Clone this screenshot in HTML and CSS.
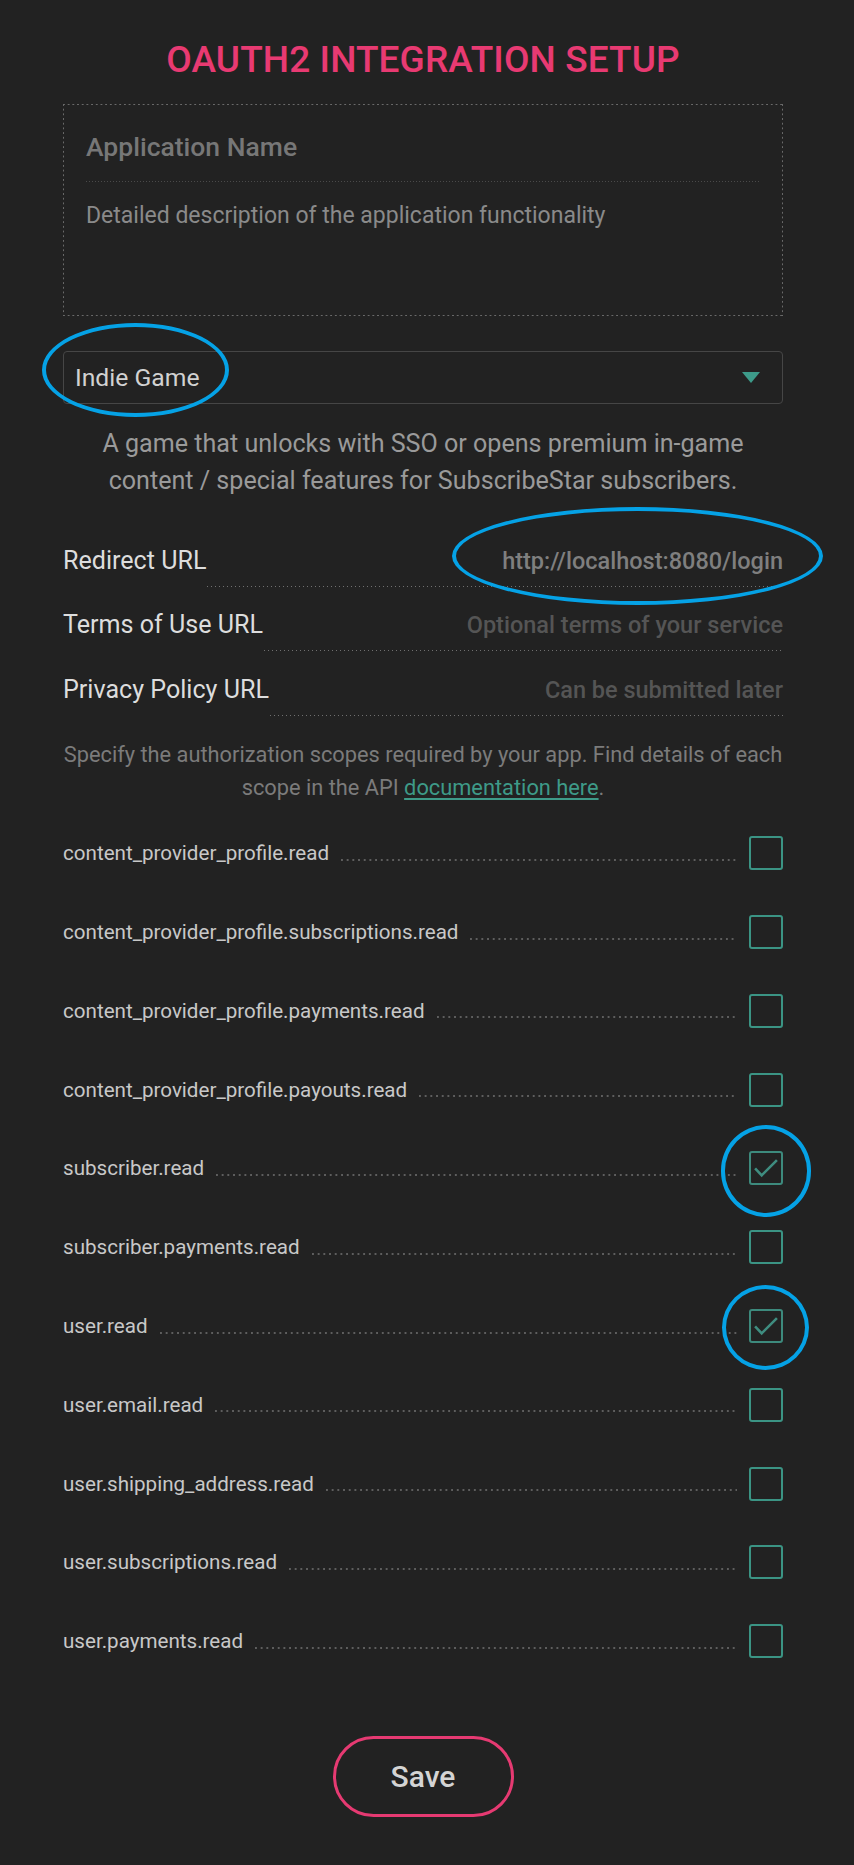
FILE: index.html
```html
<!DOCTYPE html>
<html lang="en">
<head>
<meta charset="utf-8">
<title>OAuth2 Integration Setup</title>
<link rel="stylesheet" href="styles.css">
</head>
<body>
<main class="page">
  <h1 class="title">OAUTH2 INTEGRATION SETUP</h1>

  <section class="app-box">
    <div class="app-name">Application Name</div>
    <div class="app-desc">Detailed description of the application functionality</div>
  </section>

  <div class="select">
    <span class="select-value">Indie Game</span>
    <span class="caret"></span>
  </div>

  <p class="type-desc">A game that unlocks with SSO or opens premium in-game content / special features for SubscribeStar subscribers.</p>

  <div class="url-row">
    <span class="url-label">Redirect URL</span>
    <span class="url-field filled">http://localhost:8080/login</span>
  </div>
  <div class="url-row">
    <span class="url-label">Terms of Use URL</span>
    <span class="url-field">Optional terms of your service</span>
  </div>
  <div class="url-row">
    <span class="url-label">Privacy Policy URL</span>
    <span class="url-field">Can be submitted later</span>
  </div>

  <p class="help">Specify the authorization scopes required by your app. Find details of each scope in the API <a class="doc-link" href="#">documentation here</a>.</p>

  <ul class="scopes">
    <li class="scope"><span class="scope-name">content_provider_profile.read</span><span class="leader"></span><span class="box"></span></li>
    <li class="scope"><span class="scope-name">content_provider_profile.subscriptions.read</span><span class="leader"></span><span class="box"></span></li>
    <li class="scope"><span class="scope-name">content_provider_profile.payments.read</span><span class="leader"></span><span class="box"></span></li>
    <li class="scope"><span class="scope-name">content_provider_profile.payouts.read</span><span class="leader"></span><span class="box"></span></li>
    <li class="scope"><span class="scope-name">subscriber.read</span><span class="leader"></span><span class="box checked"><svg viewBox="0 0 34 34" width="34" height="34"><polyline points="7,18.3 12.7,24.3 27,10" /></svg></span></li>
    <li class="scope"><span class="scope-name">subscriber.payments.read</span><span class="leader"></span><span class="box"></span></li>
    <li class="scope"><span class="scope-name">user.read</span><span class="leader"></span><span class="box checked"><svg viewBox="0 0 34 34" width="34" height="34"><polyline points="7,18.3 12.7,24.3 27,10" /></svg></span></li>
    <li class="scope"><span class="scope-name">user.email.read</span><span class="leader"></span><span class="box"></span></li>
    <li class="scope"><span class="scope-name">user.shipping_address.read</span><span class="leader"></span><span class="box"></span></li>
    <li class="scope"><span class="scope-name">user.subscriptions.read</span><span class="leader"></span><span class="box"></span></li>
    <li class="scope"><span class="scope-name">user.payments.read</span><span class="leader"></span><span class="box"></span></li>
  </ul>

  <div class="actions">
    <button class="save" type="button">Save</button>
  </div>

  <span class="mark mark-select"></span>
  <span class="mark mark-url"></span>
  <span class="mark mark-sub"></span>
  <span class="mark mark-user"></span>
</main>
</body>
</html>
```
FILE: styles.css
```css
html, body {
  margin: 0;
  padding: 0;
  background: #222222;
}

body {
  font-family: Roboto, "Noto Sans", "Liberation Sans", sans-serif;
  color: #cccccc;
}

.page {
  position: relative;
  width: 720px;
  margin-left: 63px;
  padding-bottom: 40px;
}

.title {
  margin: 0;
  padding-top: 38px;
  font-size: 37px;
  line-height: 44px;
  font-weight: 500;
  color: #e83a72;
  text-align: center;
  letter-spacing: 0.1px;
}

.app-box {
  box-sizing: border-box;
  height: 212px;
  margin-top: 22px;
  padding: 27px 23px 0;
  background-image:
    linear-gradient(to right, #6a6a6a 2px, transparent 2px),
    linear-gradient(to right, #6a6a6a 2px, transparent 2px),
    linear-gradient(to bottom, #6a6a6a 2px, transparent 2px),
    linear-gradient(to bottom, #6a6a6a 2px, transparent 2px);
  background-size: 4.7px 1px, 4.7px 1px, 1px 4.7px, 1px 4.7px;
  background-position: left top, left bottom, left top, right top;
  background-repeat: repeat-x, repeat-x, repeat-y, repeat-y;
}

.app-name {
  font-size: 26.5px;
  line-height: 32px;
  font-weight: 500;
  color: #777777;
  padding-bottom: 19px;
  background-image: linear-gradient(to right, #4a4a4a 1px, transparent 1px);
  background-size: 3px 1px;
  background-position: left bottom;
  background-repeat: repeat-x;
}

.app-desc {
  margin-top: 20px;
  font-size: 23px;
  line-height: 28px;
  color: #8a8a8a;
}

.select {
  box-sizing: border-box;
  height: 53px;
  margin-top: 35px;
  padding: 0 22px 0 11px;
  border: 1px solid #464646;
  border-radius: 4px;
  display: flex;
  align-items: center;
  justify-content: space-between;
}

.select-value {
  font-size: 24.7px;
  line-height: 51px;
  color: #d2d2d2;
}

.caret {
  width: 0;
  height: 0;
  border-left: 9.5px solid transparent;
  border-right: 9.5px solid transparent;
  border-top: 11px solid #3d9b8a;
}

.type-desc {
  margin: 22.3px 0 0;
  font-size: 25.1px;
  line-height: 36.7px;
  color: #9a9a9a;
  text-align: center;
}

.url-row {
  display: flex;
  align-items: baseline;
  margin-top: 23.1px;
}

.type-desc + .url-row {
  margin-top: 46.7px;
}

.url-label {
  font-size: 25.1px;
  line-height: 30px;
  color: #dddddd;
  white-space: nowrap;
}

.url-field {
  flex: 1;
  margin-left: 1px;
  padding-bottom: 11px;
  font-size: 23.5px;
  line-height: 30px;
  font-weight: 500;
  color: #555555;
  text-align: right;
  white-space: nowrap;
  background-image: linear-gradient(to right, #707070 1px, transparent 1px);
  background-size: 4px 1px;
  background-position: left bottom;
  background-repeat: repeat-x;
}

.url-field.filled {
  color: #7f7f7f;
}

.help {
  margin: 22.5px -6px 0;
  font-size: 21.8px;
  line-height: 33.3px;
  color: #7b7b7b;
  text-align: center;
}

.doc-link {
  color: #3e9a88;
  text-decoration: underline;
  text-underline-offset: 3px;
}

.scopes {
  list-style: none;
  margin: 9.2px 0 0;
  padding: 0;
}

.scope {
  display: flex;
  align-items: center;
  height: 78.8px;
}

.scope-name {
  font-size: 20.6px;
  line-height: 24px;
  color: #c8c8c8;
  white-space: nowrap;
}

.leader {
  flex: 1;
  height: 2px;
  margin: 13px 12px 0 12px;
  background-image: linear-gradient(to right, #5e5e5e 0, #5e5e5e 2px, transparent 2px);
  background-size: 5.7px 2px;
  background-repeat: repeat-x;
}

.box {
  box-sizing: border-box;
  width: 34px;
  height: 34px;
  border: 2.3px solid #3b9484;
  border-radius: 3px;
  position: relative;
  flex-shrink: 0;
}

.box.checked {
  border-color: #3d8a7d;
}

.box svg {
  position: absolute;
  left: -2.3px;
  top: -2.3px;
  fill: none;
  stroke: #3f8d80;
  stroke-width: 2.6;
  stroke-linecap: square;
  stroke-linejoin: miter;
}

.actions {
  display: flex;
  justify-content: center;
  margin-top: 55.6px;
}

.save {
  box-sizing: border-box;
  width: 181px;
  height: 81px;
  border: 3px solid #e63a72;
  border-radius: 41px;
  background: transparent;
  font-family: Roboto, "Noto Sans", "Liberation Sans", sans-serif;
  font-size: 30px;
  font-weight: 500;
  color: #d4d4d4;
  padding: 0;
  cursor: pointer;
}

/* annotation ellipses drawn over the screenshot */
.mark {
  position: absolute;
  box-sizing: border-box;
  border: 4px solid #05a2e6;
  border-radius: 50%;
  pointer-events: none;
}

.mark-select {
  left: -21px;
  top: 322.7px;
  width: 187px;
  height: 94px;
}

.mark-url {
  left: 389px;
  top: 507px;
  width: 371px;
  height: 98px;
}

.mark-sub {
  left: 657.7px;
  top: 1125px;
  width: 90.6px;
  height: 91.7px;
}

.mark-user {
  left: 659px;
  top: 1285px;
  width: 87px;
  height: 85px;
}
```
